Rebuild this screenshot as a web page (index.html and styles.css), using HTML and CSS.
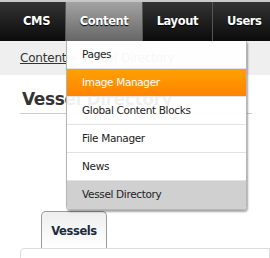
FILE: index.html
```html
<!DOCTYPE html>
<html>
  <head>
    <meta charset="utf-8" />
    <title>Vessel Directory</title>
    <link rel="stylesheet" href="styles.css">
  </head>

  <body>
    <!-- top menu -->
    <div class="topbar">
      <ul class="nav">
        <li class="nav-item cms">CMS</li>
        <li class="nav-item content active">
          Content
          <!-- dropdown -->
          <ul class="dropdown">
            <li>Pages</li>
            <li class="hover">Image Manager</li>
            <li>Global Content Blocks</li>
            <li>File Manager</li>
            <li>News</li>
            <li class="current">Vessel Directory</li>
          </ul>
        </li>
        <li class="nav-item layout">Layout</li>
        <li class="nav-item users">Users</li>
      </ul>
    </div>

    <!-- breadcrumb -->
    <div class="crumbs">
      <a href="#">Content</a> &raquo; Vessel Directory
    </div>

    <div class="main">
      <h1>Vessel Directory</h1>

      <div class="tabs">
        <div class="tab">Vessels</div>
      </div>
      <div class="panel"></div>
    </div>
  </body>
</html>
```

FILE: styles.css
```css
html,
body {
  margin: 0;
  padding: 0;
  background: #fff;
  font-family: "DejaVu Sans", Verdana, sans-serif;
  overflow: hidden;
}

/* top menu */
.topbar {
  border-top: 2px solid #c8c8c8;
  background: linear-gradient(#333, #0b0b0b);
  height: 39px;
}

.nav {
  list-style: none;
  margin: 0;
  padding: 0;
  display: flex;
  height: 39px;
}

.nav-item {
  position: relative;
  box-sizing: border-box;
  height: 39px;
  line-height: 39px;
  text-align: center;
  color: #fff;
  font-weight: bold;
  font-size: 11.5px;
  letter-spacing: -0.4px;
  border-right: 1px solid #555;
  text-shadow: 0 1px 1px #000;
  white-space: nowrap;
}
.cms {
  width: 69px;
  padding-left: 8px;
}
.content {
  width: 81px;
}
.layout {
  width: 73px;
}
.users {
  width: 60px;
  padding-left: 6px;
  border-right: none;
}
.active {
  background: linear-gradient(#a3a3a3, #666);
}

/* dropdown */
.dropdown {
  position: absolute;
  top: 39px;
  left: 0;
  width: 179px;
  margin: 0;
  padding: 0;
  list-style: none;
  background: rgba(255, 255, 255, 0.93);
  border: 1px solid #b5b5b5;
  border-top: none;
  border-radius: 0 0 4px 4px;
  box-shadow: 1px 2px 2px rgba(0, 0, 0, 0.35);
  text-align: left;
  z-index: 10;
  overflow: hidden;
}
.dropdown li {
  height: 28px;
  line-height: 27px;
  padding-left: 15px;
  border-bottom: 1px solid #e2e2e2;
  box-sizing: border-box;
  color: #222;
  font-weight: normal;
  font-size: 10.5px;
  letter-spacing: -0.35px;
  text-shadow: none;
}
.dropdown li.hover {
  background: linear-gradient(#ffa000, #ff8400);
  color: #fff;
}
.dropdown li.current {
  background: #d0d0d0;
  border-bottom: none;
}

/* breadcrumb */
.crumbs {
  background: #efefef;
  height: 34px;
  line-height: 34px;
  padding-left: 20px;
  font-size: 12px;
  color: #888;
  letter-spacing: -0.2px;
}
.crumbs a {
  color: #333;
}

.main {
  padding: 0 0 0 20px;
}

h1 {
  margin: 14px 0 0 0;
  padding: 0 0 4px 2px;
  font-size: 17px;
  color: #333;
  letter-spacing: -0.4px;
  border-bottom: 1px solid #ccc;
  width: 230px;
}

/* tabs */
.tabs {
  display: flex;
  padding-left: 21px;
  margin-top: 97px;
}
.tab {
  width: 64px;
  height: 36px;
  line-height: 38px;
  text-align: center;
  border: 1px solid #999;
  border-bottom: none;
  border-radius: 5px 5px 0 0;
  background: linear-gradient(#eee, #fff);
  font-size: 11.5px;
  font-weight: bold;
  color: #1b2a3a;
  letter-spacing: -0.4px;
}
.panel {
  height: 20px;
  border: 1px solid #ddd;
  border-radius: 4px 0 0 0;
}
```
